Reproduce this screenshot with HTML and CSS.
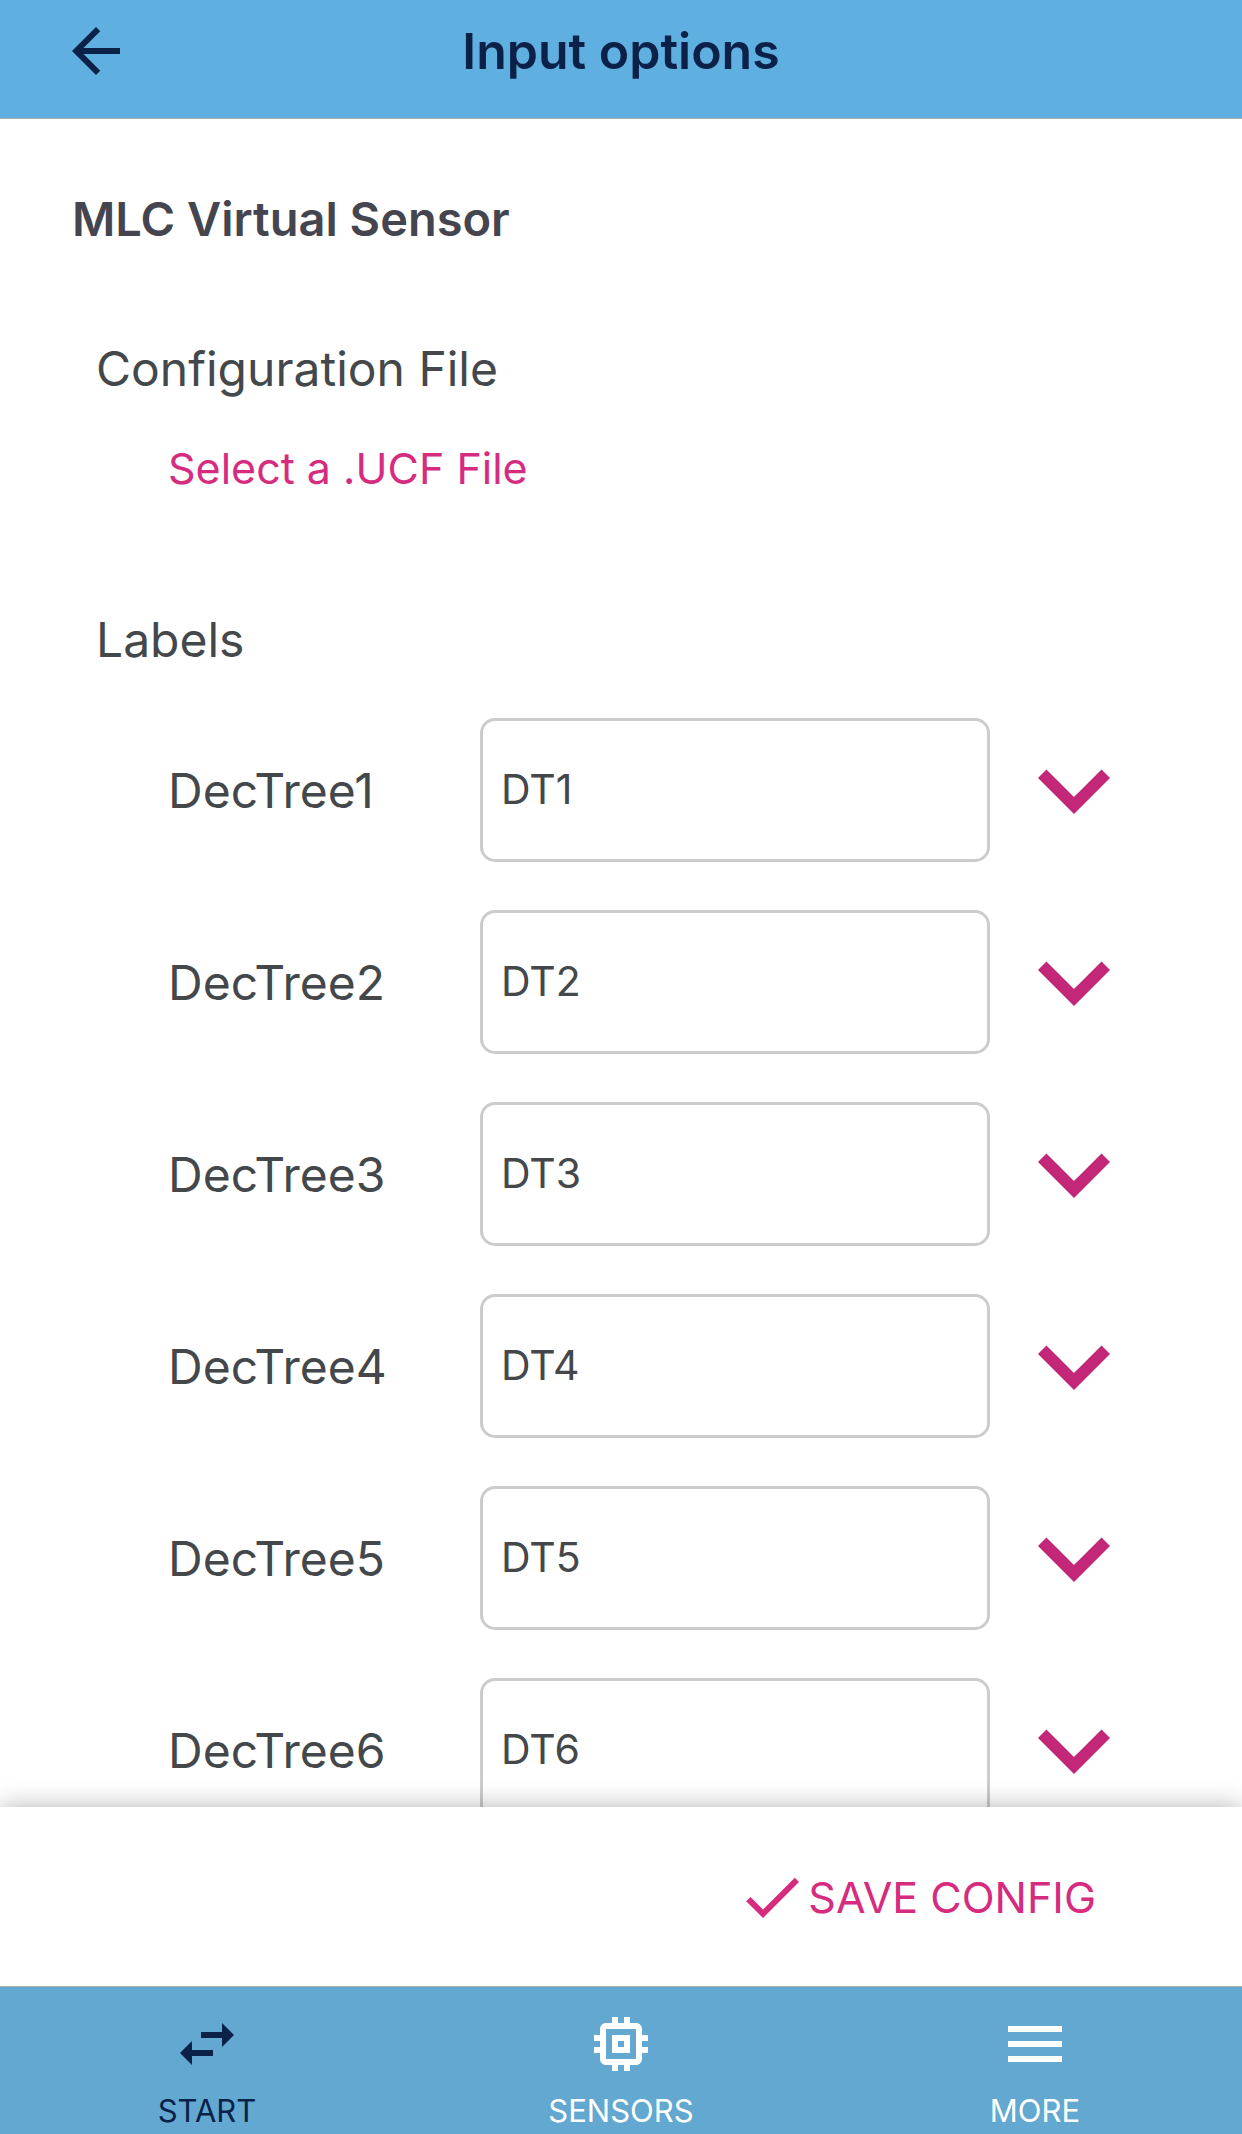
FILE: index.html
```html
<!DOCTYPE html>
<html lang="en">
<head>
<meta charset="utf-8">
<meta name="viewport" content="width=device-width, initial-scale=1">
<title>Input options</title>
<link rel="stylesheet" href="styles.css">
</head>
<body>
<header class="topbar">
  <button class="icon-button" type="button" aria-label="Back">
    <svg class="icon" viewBox="0 0 24 24" aria-hidden="true"><path d="M20 11H7.83l5.59-5.59L12 4l-8 8 8 8 1.41-1.41L7.83 13H20v-2z"/></svg>
  </button>
  <h1 class="topbar-title">Input options</h1>
</header>

<main class="content">
  <h2 class="sensor-name">MLC Virtual Sensor</h2>

  <section class="group">
    <h3 class="group-title">Configuration File</h3>
    <button class="file-button" type="button">Select a .UCF File</button>
  </section>

  <section class="group">
    <h3 class="group-title">Labels</h3>
    <div class="rows">
      <div class="row">
        <label class="row-label" for="dt1">DecTree1</label>
        <input class="row-input" id="dt1" type="text" value="DT1">
        <button class="icon-button expand" type="button" aria-label="Expand DecTree1"><svg class="icon-large" viewBox="0 0 24 24" aria-hidden="true"><path d="M16.59 8.59L12 13.17 7.41 8.59 6 10l6 6 6-6z"/></svg></button>
      </div>
      <div class="row">
        <label class="row-label" for="dt2">DecTree2</label>
        <input class="row-input" id="dt2" type="text" value="DT2">
        <button class="icon-button expand" type="button" aria-label="Expand DecTree2"><svg class="icon-large" viewBox="0 0 24 24" aria-hidden="true"><path d="M16.59 8.59L12 13.17 7.41 8.59 6 10l6 6 6-6z"/></svg></button>
      </div>
      <div class="row">
        <label class="row-label" for="dt3">DecTree3</label>
        <input class="row-input" id="dt3" type="text" value="DT3">
        <button class="icon-button expand" type="button" aria-label="Expand DecTree3"><svg class="icon-large" viewBox="0 0 24 24" aria-hidden="true"><path d="M16.59 8.59L12 13.17 7.41 8.59 6 10l6 6 6-6z"/></svg></button>
      </div>
      <div class="row">
        <label class="row-label" for="dt4">DecTree4</label>
        <input class="row-input" id="dt4" type="text" value="DT4">
        <button class="icon-button expand" type="button" aria-label="Expand DecTree4"><svg class="icon-large" viewBox="0 0 24 24" aria-hidden="true"><path d="M16.59 8.59L12 13.17 7.41 8.59 6 10l6 6 6-6z"/></svg></button>
      </div>
      <div class="row">
        <label class="row-label" for="dt5">DecTree5</label>
        <input class="row-input" id="dt5" type="text" value="DT5">
        <button class="icon-button expand" type="button" aria-label="Expand DecTree5"><svg class="icon-large" viewBox="0 0 24 24" aria-hidden="true"><path d="M16.59 8.59L12 13.17 7.41 8.59 6 10l6 6 6-6z"/></svg></button>
      </div>
      <div class="row">
        <label class="row-label" for="dt6">DecTree6</label>
        <input class="row-input" id="dt6" type="text" value="DT6">
        <button class="icon-button expand" type="button" aria-label="Expand DecTree6"><svg class="icon-large" viewBox="0 0 24 24" aria-hidden="true"><path d="M16.59 8.59L12 13.17 7.41 8.59 6 10l6 6 6-6z"/></svg></button>
      </div>
    </div>
  </section>
</main>

<div class="actions">
  <button class="save-button" type="button">
    <svg class="icon" viewBox="0 0 24 24" aria-hidden="true"><path d="M9 16.17L4.83 12l-1.42 1.41L9 19 21 7l-1.41-1.41z"/></svg>
    <span>SAVE CONFIG</span>
  </button>
</div>

<nav class="tabs" aria-label="Main">
  <a class="tab tab-active" href="#start" aria-current="page">
    <svg class="icon" viewBox="0 0 24 24" aria-hidden="true"><path d="M6.99 11L3 15l3.99 4v-3H14v-2H6.99v-3zM21 9l-3.99-4v3H10v2h7.01v3L21 9z"/></svg>
    <span>START</span>
  </a>
  <a class="tab" href="#sensors">
    <svg class="icon" viewBox="0 0 24 24" aria-hidden="true"><path d="M15 9H9v6h6V9zm-2 4h-2v-2h2v2zm8-2V9h-2V7c0-1.1-.9-2-2-2h-2V3h-2v2h-2V3H9v2H7c-1.1 0-2 .9-2 2v2H3v2h2v2H3v2h2v2c0 1.1.9 2 2 2h2v2h2v-2h2v2h2v-2h2c1.1 0 2-.9 2-2v-2h2v-2h-2v-2h2zm-4 6H7V7h10v10z"/></svg>
    <span>SENSORS</span>
  </a>
  <a class="tab" href="#more">
    <svg class="icon" viewBox="0 0 24 24" aria-hidden="true"><path d="M3 18h18v-2H3v2zm0-5h18v-2H3v2zm0-7v2h18V6H3z"/></svg>
    <span>MORE</span>
  </a>
</nav>
</body>
</html>
```
FILE: styles.css
```css
:root {
  --navy: #0c2148;
  --pink: #d62c7f;
  --text: #44484b;
}

* {
  box-sizing: border-box;
}

body {
  margin: 0;
  height: 100vh;
  display: flex;
  flex-direction: column;
  background: #fff;
  color: var(--text);
  font-family: Inter, "Liberation Sans", sans-serif;
  font-size: 48px;
  line-height: 60px;
}

h1, h2, h3 {
  margin: 0;
}

button, input {
  font: inherit;
  color: inherit;
}

button {
  padding: 0;
  border: 0;
  background: none;
  cursor: pointer;
}

.icon, .icon-large {
  display: block;
  fill: currentColor;
}

.icon {
  width: 72px;
  height: 72px;
}

.icon-large {
  width: 144px;
  height: 144px;
}

.topbar {
  flex: none;
  display: grid;
  grid-template-columns: 72px 1fr 72px;
  align-items: center;
  padding: 15px 60px 31px;
  border-bottom: 1px solid #a9aeb2;
  background: #60afe1;
  color: var(--navy);
}

.topbar-title {
  font-size: 50px;
  font-weight: 600;
  text-align: center;
}

.content {
  flex: 1;
  min-height: 0;
  overflow-y: auto;
  scrollbar-width: none;
  padding: 70px 96px 0 72px;
}

.sensor-name {
  color: #45454f;
  font-size: 47px;
  font-weight: 600;
}

.group {
  padding-left: 24px;
}

.sensor-name + .group {
  margin: 90px 0 112px;
}

.group-title {
  font-size: 48px;
  font-weight: 400;
}

.file-button {
  display: block;
  margin: 39px 0 0 72px;
  color: var(--pink);
  font-size: 43px;
}

.rows {
  display: grid;
  gap: 48px;
  margin-top: 48px;
  padding-left: 72px;
}

.row {
  display: grid;
  grid-template-columns: 300px 1fr 144px;
  column-gap: 12px;
  align-items: center;
}

.row-label {
  padding-top: 2px;
}

.row-input {
  width: 100%;
  min-width: 0;
  height: 144px;
  padding: 0 18px 3px;
  border: 3px solid #ccc;
  border-radius: 15px;
  background: #fff;
  font-size: 41px;
}

.expand {
  color: #c32878;
}

.actions {
  flex: none;
  z-index: 1;
  display: flex;
  justify-content: flex-end;
  padding: 54px 146px 53px;
  background: #fff;
  box-shadow: 0 0 24px rgba(0, 0, 0, 0.3);
}

.save-button {
  display: flex;
  align-items: center;
  color: var(--pink);
  font-size: 43px;
}

.tabs {
  flex: none;
  z-index: 2;
  display: grid;
  grid-template-columns: repeat(3, 1fr);
  border-top: 1px solid #a9aeb2;
  background: #62a8d1;
}

.tab {
  display: flex;
  flex-direction: column;
  align-items: center;
  gap: 13px;
  padding: 21px 0 5px;
  color: #fff;
  font-size: 31px;
  line-height: 36px;
  text-decoration: none;
}

.tab-active {
  color: var(--navy);
}
```
